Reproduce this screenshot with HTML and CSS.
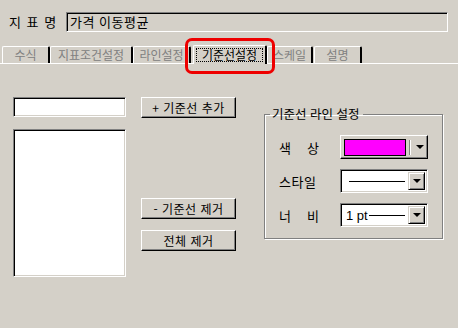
FILE: index.html
```html
<!DOCTYPE html>
<html lang="ko">

<head>
    <meta charset="UTF-8">
    <meta name="viewport" content="width=device-width, initial-scale=1.0">
    <title>지표 설정</title>
    <link rel="stylesheet" href="styles.css">
</head>

<body>
    <div class="dialog">
        <div class="name-row">
            <span class="name-label">지 표 명</span>
            <div class="name-field">가격 이동평균</div>
        </div>

        <ul class="tabs">
            <li class="tab tab-1">수식</li>
            <li class="tab tab-2">지표조건설정</li>
            <li class="tab tab-3">라인설정</li>
            <li class="tab tab-4 active"><span class="focus">기준선설정</span></li>
            <li class="tab tab-5">스케일</li>
            <li class="tab tab-6">설명</li>
        </ul>

        <div class="panel">
            <div class="col-list">
                <div class="sunken value-input"></div>
                <div class="sunken list-box"></div>
            </div>

            <div class="col-buttons">
                <button class="btn btn-add">+ 기준선 추가</button>
                <button class="btn btn-remove">- 기준선 제거</button>
                <button class="btn btn-clear">전체 제거</button>
            </div>

            <fieldset class="group">
                <legend>기준선 라인 설정</legend>
                <div class="row">
                    <span class="row-label">색 상</span>
                    <div class="combo combo-color">
                        <span class="swatch"></span>
                        <span class="sep"></span>
                        <span class="arrow"></span>
                    </div>
                </div>
                <div class="row">
                    <span class="row-label wide">스타일</span>
                    <div class="combo combo-select">
                        <span class="combo-value"><span class="line"></span></span>
                        <span class="drop"><span class="arrow"></span></span>
                    </div>
                </div>
                <div class="row">
                    <span class="row-label">너 비</span>
                    <div class="combo combo-select">
                        <span class="combo-value"><span class="pt">1 pt</span><span class="line short"></span></span>
                        <span class="drop"><span class="arrow"></span></span>
                    </div>
                </div>
            </fieldset>
        </div>
    </div>
</body>

</html>
```

FILE: styles.css
```css
* {
    padding: 0;
    margin: 0;
    list-style: none;
    box-sizing: border-box;
}

body {
    background-color: #d4d0c8;
    font-family: "Noto Sans CJK KR", "Noto Sans", sans-serif;
    font-size: 12px;
    color: #000;
}

.dialog {
    width: 458px;
    height: 328px;
    overflow: hidden;
}

/* 지표명 */
.name-row {
    display: flex;
    align-items: center;
    padding: 12px 10px 0 9px;
    height: 32px;
}

.name-label {
    width: 57px;
    line-height: 20px;
    font-size: 13px;
    letter-spacing: 1px;
}

.name-field {
    flex: 1;
    height: 20px;
    line-height: 17px;
    padding-left: 3px;
    font-size: 13px;
    letter-spacing: 0.5px;
    border-top: 1px solid #808080;
    border-left: 1px solid #808080;
    border-right: 1px solid #fff;
    border-bottom: 1px solid #fff;
    box-shadow: inset 1px 1px 0 #000;
}

/* 탭 */
.tabs {
    display: flex;
    align-items: flex-end;
    margin-top: 13px;
    padding-left: 2px;
    height: 19px;
    border-bottom: 1px solid #fff;
}

.tab {
    height: 17px;
    line-height: 15px;
    text-align: center;
    color: #808080;
    border-top: 1px solid #fff;
    border-left: 1px solid #fff;
    border-right: 2px solid #000;
    border-radius: 2px 2px 0 0;
}

.tab-1 { width: 48px; }
.tab-2 { width: 83px; }
.tab-3 { width: 58px; margin-right: 2px; }
.tab-5 { width: 46px; }
.tab-6 { width: 48px; margin-left: 1px; }

.tab.active {
    position: relative;
    width: 74px;
    height: 19px;
    color: #000;
    padding: 2px 2px 0;
    margin-bottom: -1px;
    background-color: #d4d0c8;
}

.focus {
    display: block;
    height: 14px;
    line-height: 12px;
    border: 1px dotted #000;
}

/* 강조 표시 */
.tab.active::after {
    content: "";
    position: absolute;
    left: -9px;
    top: -8px;
    width: 84px;
    height: 30px;
    border: 3px solid #ee0000;
    border-radius: 7px;
}

/* 본문 */
.panel {
    display: flex;
    align-items: flex-start;
    padding: 33px 0 0 13px;
}

.sunken {
    background-color: #fff;
    border-top: 1px solid #808080;
    border-left: 1px solid #808080;
    border-right: 1px solid #fff;
    border-bottom: 1px solid #fff;
    box-shadow: inset 1px 1px 0 #000, inset -1px -1px 0 #d4d0c8;
}

.col-list {
    width: 113px;
    display: flex;
    flex-direction: column;
    gap: 12px;
}

.value-input {
    height: 20px;
}

.list-box {
    height: 148px;
}

.col-buttons {
    display: flex;
    flex-direction: column;
    margin-left: 15px;
    width: 95px;
}

.btn {
    height: 21px;
    font-family: inherit;
    font-size: 12px;
    letter-spacing: 0.5px;
    color: #000;
    background-color: #d4d0c8;
    border-top: 1px solid #fff;
    border-left: 1px solid #fff;
    border-right: 1px solid #000;
    border-bottom: 1px solid #000;
    box-shadow: inset -1px -1px 0 #808080;
}

.btn-remove {
    margin-top: 80px;
}

.btn-clear {
    margin-top: 11px;
}

/* 기준선 라인 설정 */
.group {
    margin: 9px 0 0 28px;
    width: 179px;
    height: 133px;
    border: 1px solid #808080;
    box-shadow: 1px 1px 0 #fff, inset 1px 1px 0 #fff;
    padding: 13px 0 0 14px;
}

.group legend {
    margin-left: -9px;
    padding: 0 3px 0 2px;
    line-height: 16px;
    font-size: 12.5px;
}

.row {
    display: flex;
    align-items: center;
    height: 24px;
    margin-bottom: 10px;
}

.row:last-child {
    margin-bottom: 0;
}

.row-label {
    width: 40px;
    margin-right: 21px;
    font-size: 13px;
    text-align: justify;
    text-align-last: justify;
}

.row-label.wide {
    letter-spacing: 0.5px;
}

.combo {
    width: 88px;
    height: 24px;
}

.combo-color {
    display: flex;
    align-items: center;
    padding: 3px 0 0 3px;
    border-top: 1px solid #fff;
    border-left: 1px solid #fff;
    border-right: 1px solid #000;
    border-bottom: 1px solid #000;
    box-shadow: inset -1px -1px 0 #808080;
}

.swatch {
    width: 62px;
    height: 17px;
    margin-top: -3px;
    background-color: #ff00ff;
    border: 1px solid #000;
}

.sep {
    width: 2px;
    height: 15px;
    margin: -3px 0 0 3px;
    border-left: 1px solid #808080;
    border-right: 1px solid #fff;
}

.combo-color .arrow {
    margin: -3px 0 0 5px;
}

.arrow {
    display: block;
    width: 0;
    height: 0;
    border-left: 4px solid transparent;
    border-right: 4px solid transparent;
    border-top: 4px solid #000;
}

.combo-select {
    display: flex;
    align-items: center;
    padding: 2px;
    background-color: #fff;
    border-top: 1px solid #808080;
    border-left: 1px solid #808080;
    border-right: 1px solid #fff;
    border-bottom: 1px solid #fff;
    box-shadow: inset 1px 1px 0 #000, inset -1px -1px 0 #d4d0c8;
}

.combo-value {
    flex: 1;
    display: flex;
    align-items: center;
    padding: 0 3px 0 3px;
}

.line {
    display: block;
    flex: 1;
    height: 1px;
    margin-left: 3px;
    background-color: #000;
}

.line.short {
    margin-left: 1px;
}

.pt {
    font-family: "Liberation Sans", sans-serif;
    font-size: 13px;
}

.drop {
    width: 17px;
    height: 18px;
    display: flex;
    align-items: center;
    justify-content: center;
    background-color: #d4d0c8;
    border-top: 1px solid #d4d0c8;
    border-left: 1px solid #d4d0c8;
    border-right: 1px solid #000;
    border-bottom: 1px solid #000;
    box-shadow: inset 1px 1px 0 #fff, inset -1px -1px 0 #808080;
}
```
